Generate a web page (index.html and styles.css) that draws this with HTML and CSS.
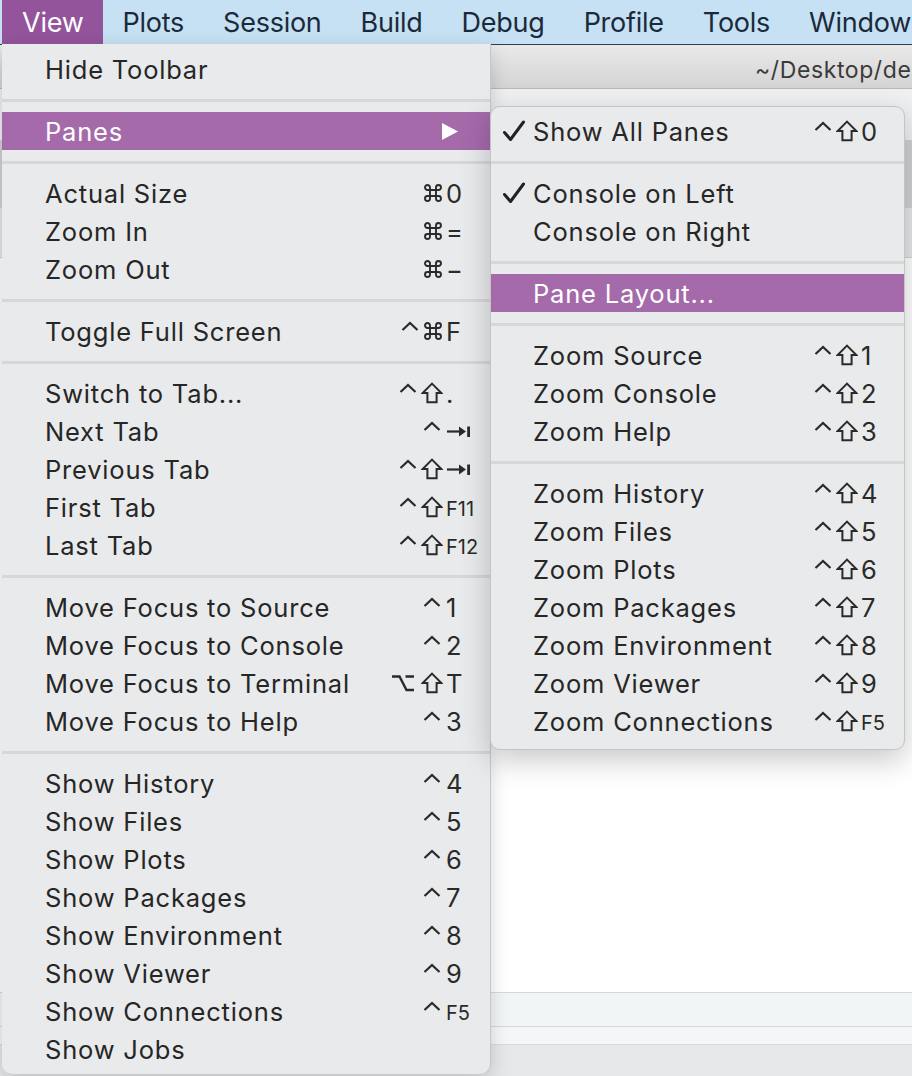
FILE: index.html
```html
<!DOCTYPE html>
<html>
<head>
<meta charset="utf-8">
<link rel="stylesheet" href="styles.css">
</head>
<body>
<svg class="defs" width="0" height="0" aria-hidden="true">
  <defs>
    <symbol id="ctl" viewBox="0 0 22 22"><path d="M3.5 10 L11 3 L18.5 10" fill="none" stroke="currentColor" stroke-width="2.2" stroke-linejoin="miter"/></symbol>
    <symbol id="shift" viewBox="0 0 22 22"><path d="M11 1.6 L20.4 11 L15.6 11 L15.6 20.2 L6.4 20.2 L6.4 11 L1.6 11 Z" fill="none" stroke="currentColor" stroke-width="2" stroke-linejoin="miter"/></symbol>
    <symbol id="cmd" viewBox="0 0 20 20"><path d="M7 7 L7 4.5 A2.5 2.5 0 1 0 4.5 7 L15.5 7 A2.5 2.5 0 1 0 13 4.5 L13 15.5 A2.5 2.5 0 1 0 15.5 13 L4.5 13 A2.5 2.5 0 1 0 7 15.5 Z" fill="none" stroke="currentColor" stroke-width="1.9"/></symbol>
    <symbol id="opt" viewBox="0 0 24 22"><path d="M1 4.5 H8.5 L15.5 18 H23 M14.5 4.5 H23" fill="none" stroke="currentColor" stroke-width="2.4"/></symbol>
    <symbol id="tab" viewBox="0 0 25 22"><path d="M1 11.5 H15" stroke="currentColor" stroke-width="2.2"/><polygon points="13,6.5 20,11.5 13,16.5" fill="currentColor"/><rect x="21.2" y="6.5" width="2.8" height="10.5" fill="currentColor"/></symbol>
  </defs>
</svg>
<div class="screen">
  <nav class="menubar">
    <span class="mb-item active">View</span>
    <span class="mb-item">Plots</span>
    <span class="mb-item">Session</span>
    <span class="mb-item">Build</span>
    <span class="mb-item">Debug</span>
    <span class="mb-item">Profile</span>
    <span class="mb-item">Tools</span>
    <span class="mb-item">Window</span>
  </nav>

  <div class="window">
    <div class="titlebar"><span class="title">~/Desktop/de</span></div>
    <div class="toolbar"></div>
    <div class="tabstrip"></div>
    <div class="panebar"></div>
    <div class="editor"></div>
    <div class="band band-a"></div>
    <div class="band band-b"></div>
    <div class="footer"></div>
  </div>

  <div class="menu main-menu">
    <div class="item"><span class="label">Hide Toolbar</span></div>
    <div class="sep"></div>
    <div class="item hl"><span class="label">Panes</span>
      <svg class="arrow" width="16" height="17" viewBox="0 0 16 17"><polygon points="0,0 16,8.5 0,17" fill="#fff"/></svg>
    </div>
    <div class="sep"></div>
    <div class="item"><span class="label">Actual Size</span><span class="sc"><span class="mods"><svg class="m-cmd"><use href="#cmd"/></svg></span><span class="key">0</span></span></div>
    <div class="item"><span class="label">Zoom In</span><span class="sc"><span class="mods"><svg class="m-cmd"><use href="#cmd"/></svg></span><span class="key">=</span></span></div>
    <div class="item"><span class="label">Zoom Out</span><span class="sc"><span class="mods"><svg class="m-cmd"><use href="#cmd"/></svg></span><span class="key">−</span></span></div>
    <div class="sep"></div>
    <div class="item"><span class="label">Toggle Full Screen</span><span class="sc"><span class="mods"><svg class="m-ctl"><use href="#ctl"/></svg><svg class="m-cmd"><use href="#cmd"/></svg></span><span class="key">F</span></span></div>
    <div class="sep"></div>
    <div class="item"><span class="label">Switch to Tab...</span><span class="sc"><span class="mods"><svg class="m-ctl"><use href="#ctl"/></svg><svg class="m-shift"><use href="#shift"/></svg></span><span class="key">.</span></span></div>
    <div class="item"><span class="label">Next Tab</span><span class="sc"><span class="mods"><svg class="m-ctl"><use href="#ctl"/></svg></span><span class="key"><svg class="m-tab"><use href="#tab"/></svg></span></span></div>
    <div class="item"><span class="label">Previous Tab</span><span class="sc"><span class="mods"><svg class="m-ctl"><use href="#ctl"/></svg><svg class="m-shift"><use href="#shift"/></svg></span><span class="key"><svg class="m-tab"><use href="#tab"/></svg></span></span></div>
    <div class="item"><span class="label">First Tab</span><span class="sc"><span class="mods"><svg class="m-ctl"><use href="#ctl"/></svg><svg class="m-shift"><use href="#shift"/></svg></span><span class="key small">F11</span></span></div>
    <div class="item"><span class="label">Last Tab</span><span class="sc"><span class="mods"><svg class="m-ctl"><use href="#ctl"/></svg><svg class="m-shift"><use href="#shift"/></svg></span><span class="key small">F12</span></span></div>
    <div class="sep"></div>
    <div class="item"><span class="label">Move Focus to Source</span><span class="sc"><span class="mods"><svg class="m-ctl"><use href="#ctl"/></svg></span><span class="key">1</span></span></div>
    <div class="item"><span class="label">Move Focus to Console</span><span class="sc"><span class="mods"><svg class="m-ctl"><use href="#ctl"/></svg></span><span class="key">2</span></span></div>
    <div class="item"><span class="label">Move Focus to Terminal</span><span class="sc"><span class="mods"><svg class="m-opt"><use href="#opt"/></svg><svg class="m-shift"><use href="#shift"/></svg></span><span class="key">T</span></span></div>
    <div class="item"><span class="label">Move Focus to Help</span><span class="sc"><span class="mods"><svg class="m-ctl"><use href="#ctl"/></svg></span><span class="key">3</span></span></div>
    <div class="sep"></div>
    <div class="item"><span class="label">Show History</span><span class="sc"><span class="mods"><svg class="m-ctl"><use href="#ctl"/></svg></span><span class="key">4</span></span></div>
    <div class="item"><span class="label">Show Files</span><span class="sc"><span class="mods"><svg class="m-ctl"><use href="#ctl"/></svg></span><span class="key">5</span></span></div>
    <div class="item"><span class="label">Show Plots</span><span class="sc"><span class="mods"><svg class="m-ctl"><use href="#ctl"/></svg></span><span class="key">6</span></span></div>
    <div class="item"><span class="label">Show Packages</span><span class="sc"><span class="mods"><svg class="m-ctl"><use href="#ctl"/></svg></span><span class="key">7</span></span></div>
    <div class="item"><span class="label">Show Environment</span><span class="sc"><span class="mods"><svg class="m-ctl"><use href="#ctl"/></svg></span><span class="key">8</span></span></div>
    <div class="item"><span class="label">Show Viewer</span><span class="sc"><span class="mods"><svg class="m-ctl"><use href="#ctl"/></svg></span><span class="key">9</span></span></div>
    <div class="item"><span class="label">Show Connections</span><span class="sc"><span class="mods"><svg class="m-ctl"><use href="#ctl"/></svg></span><span class="key small">F5</span></span></div>
    <div class="item"><span class="label">Show Jobs</span></div>
  </div>

  <div class="menu sub-menu">
    <div class="item"><span class="check"><svg width="24" height="22" viewBox="0 0 24 22"><path d="M2.5 12.5 L8.5 19.5 L21.5 2" fill="none" stroke="#222" stroke-width="3" stroke-linecap="round" stroke-linejoin="round"/></svg></span><span class="label">Show All Panes</span><span class="sc"><span class="mods"><svg class="m-ctl"><use href="#ctl"/></svg><svg class="m-shift"><use href="#shift"/></svg></span><span class="key">0</span></span></div>
    <div class="sep"></div>
    <div class="item"><span class="check"><svg width="24" height="22" viewBox="0 0 24 22"><path d="M2.5 12.5 L8.5 19.5 L21.5 2" fill="none" stroke="#222" stroke-width="3" stroke-linecap="round" stroke-linejoin="round"/></svg></span><span class="label">Console on Left</span></div>
    <div class="item"><span class="label">Console on Right</span></div>
    <div class="sep"></div>
    <div class="item hl"><span class="label">Pane Layout...</span></div>
    <div class="sep"></div>
    <div class="item"><span class="label">Zoom Source</span><span class="sc"><span class="mods"><svg class="m-ctl"><use href="#ctl"/></svg><svg class="m-shift"><use href="#shift"/></svg></span><span class="key">1</span></span></div>
    <div class="item"><span class="label">Zoom Console</span><span class="sc"><span class="mods"><svg class="m-ctl"><use href="#ctl"/></svg><svg class="m-shift"><use href="#shift"/></svg></span><span class="key">2</span></span></div>
    <div class="item"><span class="label">Zoom Help</span><span class="sc"><span class="mods"><svg class="m-ctl"><use href="#ctl"/></svg><svg class="m-shift"><use href="#shift"/></svg></span><span class="key">3</span></span></div>
    <div class="sep"></div>
    <div class="item"><span class="label">Zoom History</span><span class="sc"><span class="mods"><svg class="m-ctl"><use href="#ctl"/></svg><svg class="m-shift"><use href="#shift"/></svg></span><span class="key">4</span></span></div>
    <div class="item"><span class="label">Zoom Files</span><span class="sc"><span class="mods"><svg class="m-ctl"><use href="#ctl"/></svg><svg class="m-shift"><use href="#shift"/></svg></span><span class="key">5</span></span></div>
    <div class="item"><span class="label">Zoom Plots</span><span class="sc"><span class="mods"><svg class="m-ctl"><use href="#ctl"/></svg><svg class="m-shift"><use href="#shift"/></svg></span><span class="key">6</span></span></div>
    <div class="item"><span class="label">Zoom Packages</span><span class="sc"><span class="mods"><svg class="m-ctl"><use href="#ctl"/></svg><svg class="m-shift"><use href="#shift"/></svg></span><span class="key">7</span></span></div>
    <div class="item"><span class="label">Zoom Environment</span><span class="sc"><span class="mods"><svg class="m-ctl"><use href="#ctl"/></svg><svg class="m-shift"><use href="#shift"/></svg></span><span class="key">8</span></span></div>
    <div class="item"><span class="label">Zoom Viewer</span><span class="sc"><span class="mods"><svg class="m-ctl"><use href="#ctl"/></svg><svg class="m-shift"><use href="#shift"/></svg></span><span class="key">9</span></span></div>
    <div class="item"><span class="label">Zoom Connections</span><span class="sc"><span class="mods"><svg class="m-ctl"><use href="#ctl"/></svg><svg class="m-shift"><use href="#shift"/></svg></span><span class="key small">F5</span></span></div>
  </div>
</div>
</body>
</html>
```

FILE: styles.css
```css
* { box-sizing: border-box; }
html, body { margin: 0; padding: 0; }
body { background: #e6e7e9; }

.defs { position: absolute; width: 0; height: 0; overflow: hidden; }

.screen {
  position: relative;
  width: 912px;
  height: 1076px;
  overflow: hidden;
  font-family: Inter, "Noto Sans", sans-serif;
}

/* ---------- menu bar ---------- */
.menubar {
  height: 44px;
  display: flex;
  align-items: stretch;
  padding-left: 2px;
  background: #c6e1f3;
  white-space: nowrap;
}
.mb-item {
  display: flex;
  align-items: center;
  padding: 0 19px 0 20px;
  font-size: 27px;
  color: #1b2a3b;
  letter-spacing: -0.25px;
}
.mb-item.active {
  background: #93549b;
  color: #fff;
}

/* ---------- app window behind ---------- */
.window {
  display: flex;
  flex-direction: column;
  height: 1032px;
  border-top: 1px solid #2e3e50;
}
.titlebar {
  height: 44px;
  background: linear-gradient(#e9e9e9, #d4d4d4);
  border-bottom: 1px solid #b8b8b8;
  display: flex;
  align-items: center;
  padding-left: 755px;
  white-space: nowrap;
  overflow: hidden;
}
.title {
  font-size: 23px;
  color: #3a3a3a;
  padding-top: 6px;
  letter-spacing: 0.6px;
}
.toolbar { height: 52px; background: #eef0f1; border-bottom: 1px solid #d0d2d4; }
.tabstrip { height: 67px; background: #d0d1d2; }
.panebar { height: 50px; background: #e6e7e8; border-bottom: 1px solid #cfd1d3; }
.editor { flex: 1; background: #ffffff; border-bottom: 1px solid #d6d8da; }
.band-a { height: 34px; background: #f2f5f6; border-bottom: 1px solid #d6d8da; }
.band-b { height: 18px; background: #f5f6f7; border-bottom: 1px solid #d6d8da; }
.footer { height: 31px; background: #e6e7e9; }

/* ---------- menus ---------- */
.menu {
  position: absolute;
  background: #e9eaeb;
  color: #262626;
  font-size: 25.5px;
  letter-spacing: 0.8px;
  white-space: nowrap;
}
.main-menu {
  left: 2px;
  top: 44px;
  width: 488px;
  padding: 6px 0 6px;
  border-radius: 0 0 10px 10px;
  box-shadow: 1px 0 0 #c6c7c8, 0 6px 20px rgba(0, 0, 0, 0.18);
}
.sub-menu {
  left: 490px;
  top: 106px;
  width: 415px;
  padding: 5px 0 9px;
  border: 1px solid #c3c4c5;
  border-radius: 10px;
  box-shadow: 0 10px 30px rgba(0, 0, 0, 0.22);
}

.item {
  display: flex;
  align-items: center;
  height: 38px;
  padding: 0 10px 0 43px;
}
.sub-menu .item { padding-left: 42px; padding-right: 9px; }
.item .label { flex: 1; }
.item.hl { background: #a46aaa; color: #fff; }

.check {
  display: flex;
  align-items: center;
  width: 31px;
  margin-left: -31px;
}

.arrow { margin-right: 22px; }

.sc {
  display: flex;
  align-items: center;
  color: #2a2a2a;
}
.mods {
  display: flex;
  align-items: center;
  gap: 2px;
  margin-right: 3px;
}
.mods svg { display: block; }
.m-ctl { width: 22px; height: 22px; }
.m-shift { width: 22px; height: 22px; }
.m-cmd { width: 20px; height: 20px; }
.m-opt { width: 24px; height: 22px; margin-right: 4px; }
.m-tab { width: 25px; height: 22px; display: block; }

.key {
  display: flex;
  align-items: center;
  width: 34px;
  letter-spacing: 0;
}
.key.small { font-size: 20px; padding-top: 4px; }

.sep {
  height: 24px;
  display: flex;
  align-items: center;
}
.sep::before {
  content: "";
  flex: 1;
  height: 3px;
  background: #d6d7d9;
}
```
